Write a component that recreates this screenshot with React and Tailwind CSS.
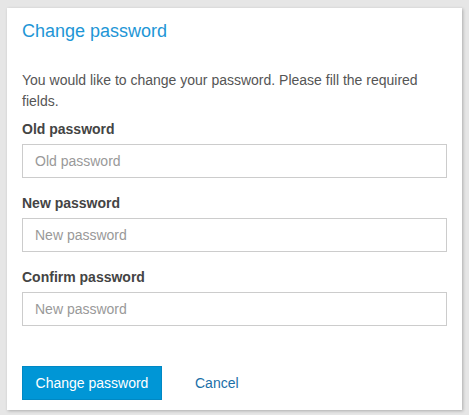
export default function App() {
  return (
    <div className="min-h-screen bg-[#e6e6e6] pt-[8px] pl-[7px]" style={{ fontFamily: '"Liberation Sans", Arial, sans-serif' }}>
      <div className="w-[455px] h-[402px] bg-white px-[15px] pt-[4px] shadow-[1px_1px_3px_rgba(0,0,0,0.25)]">
        <h2 className="text-[18px] leading-[38px] text-[#1e96d6]">Change password</h2>
        <p className="mt-[20px] text-[14px] leading-[21px] text-[#555]">
          You would like to change your password. Please fill the required fields.
        </p>
        <form className="mt-[7px]" onSubmit={(e) => e.preventDefault()}>
          {[
            ["Old password", "Old password"],
            ["New password", "New password"],
            ["Confirm password", "New password"],
          ].map(([label, ph]) => (
            <div key={label} className="mb-[15px]">
              <label className="block mb-[5px] text-[14px] leading-[20px] font-bold text-[#444]">{label}</label>
              <input
                type="password"
                placeholder={ph}
                className="block w-full h-[34px] border border-[#ccc] px-[12px] text-[14px] text-[#555] placeholder:text-[#999] outline-none"
              />
            </div>
          ))}
          <div className="mt-[40px] flex items-center">
            <button type="submit" className="h-[34px] w-[140px] bg-[#0096d6] border border-[#0088c4] text-white text-[14px]">
              Change password
            </button>
            <button type="button" className="ml-[33px] text-[14px] text-[#1a6fa8]">Cancel</button>
          </div>
        </form>
      </div>
    </div>
  );
}
